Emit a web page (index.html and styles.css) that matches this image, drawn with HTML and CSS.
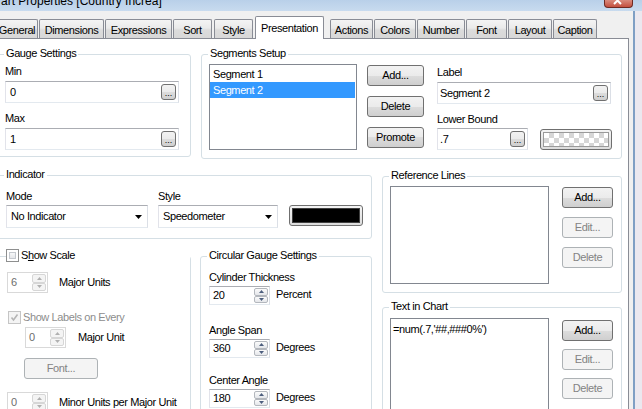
FILE: index.html
```html
<!DOCTYPE html>
<html>
<head>
<meta charset="utf-8">
<link rel="stylesheet" href="styles.css">
</head>
<body>
<div class="titlebar">
  <span class="title">art Properties [Country Increa]</span>
  <span class="close"><svg width="12" height="6" viewBox="0 0 12 6"><path d="M1 -3 L8 4 M8 -3 L1 4" stroke="#fff" stroke-width="2" fill="none"/></svg></span>
</div>
<div class="frame">
  <div class="client">
    <div class="tabs">
      <div class="tab t1">General</div>
      <div class="tab t2">Dimensions</div>
      <div class="tab t3">Expressions</div>
      <div class="tab t4">Sort</div>
      <div class="tab t5">Style</div>
      <div class="tab t6 sel">Presentation</div>
      <div class="tab t7">Actions</div>
      <div class="tab t8">Colors</div>
      <div class="tab t9">Number</div>
      <div class="tab t10">Font</div>
      <div class="tab t11">Layout</div>
      <div class="tab t12">Caption</div>
    </div>
    <div class="panel">
      <div class="row-top">
        <div class="group g-gauge">
          <div class="gtitle">Gauge Settings</div>
          <div class="gbody">
            <div class="lbl">Min</div>
            <div class="textbox tb-gauge"><span>0</span><span class="dots">...</span></div>
            <div class="lbl lbl-next">Max</div>
            <div class="textbox tb-gauge"><span>1</span><span class="dots">...</span></div>
          </div>
        </div>
        <div class="group g-seg">
          <div class="gtitle">Segments Setup</div>
          <div class="gbody seg-body">
            <div class="list seg-list">
              <div class="item">Segment 1</div>
              <div class="item sel">Segment 2</div>
            </div>
            <div class="btncol seg-btns">
              <div class="btn">Add...</div>
              <div class="btn">Delete</div>
              <div class="btn">Promote</div>
            </div>
            <div class="seg-fields">
              <div class="lbl">Label</div>
              <div class="textbox tb-label"><span>Segment 2</span><span class="dots">...</span></div>
              <div class="lbl lbl-next">Lower Bound</div>
              <div class="bound-row">
                <div class="textbox tb-bound"><span>.7</span><span class="dots">...</span></div>
                <div class="swatch sw-check"><div class="sw-inner checker"></div></div>
              </div>
            </div>
          </div>
        </div>
      </div>
      <div class="row-bottom">
        <div class="leftcol">
          <div class="group g-ind">
            <div class="gtitle">Indicator</div>
            <div class="gbody ind-body">
              <div class="ind-col ind-mode">
                <div class="lbl">Mode</div>
                <div class="combo"><span>No Indicator</span><svg class="carrow" width="7" height="4" viewBox="0 0 7 4"><path d="M0 0 H7 L3.5 4 Z" fill="#000"/></svg></div>
              </div>
              <div class="ind-col ind-style">
                <div class="lbl">Style</div>
                <div class="combo"><span>Speedometer</span><svg class="carrow" width="7" height="4" viewBox="0 0 7 4"><path d="M0 0 H7 L3.5 4 Z" fill="#000"/></svg></div>
              </div>
              <div class="swatch sw-black"><div class="sw-inner black"></div></div>
            </div>
          </div>
          <div class="row-lower">
            <div class="group g-scale">
              <div class="gtitle chk-title"><span class="chk"></span><span class="chk-text">S<u>h</u>ow Scale</span></div>
              <div class="gbody scale-body">
                <div class="spinrow sr-major">
                  <div class="spin dis sp-small"><span class="val">6</span><span class="arrows"><span class="arr"><svg width="5" height="3" viewBox="0 0 5 3"><path d="M0 3 L2.5 0 L5 3Z"/></svg></span><span class="arr"><svg width="5" height="3" viewBox="0 0 5 3"><path d="M0 0 L2.5 3 L5 0Z"/></svg></span></span></div>
                  <span class="spinlbl">Major Units</span>
                </div>
                <div class="chkrow">
                  <span class="chk chk-dis"><svg width="9" height="9" viewBox="0 0 9 9"><path d="M1.5 4.5 L3.5 7 L7.5 1.5" stroke="#b4b4b4" stroke-width="1.6" fill="none"/></svg></span>
                  <span class="distext">Show Labels on Every</span>
                </div>
                <div class="spinrow sr-unit">
                  <div class="spin dis sp-small"><span class="val">0</span><span class="arrows"><span class="arr"><svg width="5" height="3" viewBox="0 0 5 3"><path d="M0 3 L2.5 0 L5 3Z"/></svg></span><span class="arr"><svg width="5" height="3" viewBox="0 0 5 3"><path d="M0 0 L2.5 3 L5 0Z"/></svg></span></span></div>
                  <span class="spinlbl">Major Unit</span>
                </div>
                <div class="btn dis font-btn">Font...</div>
                <div class="spinrow sr-minor">
                  <div class="spin dis sp-small"><span class="val">0</span><span class="arrows"><span class="arr"><svg width="5" height="3" viewBox="0 0 5 3"><path d="M0 3 L2.5 0 L5 3Z"/></svg></span><span class="arr"><svg width="5" height="3" viewBox="0 0 5 3"><path d="M0 0 L2.5 3 L5 0Z"/></svg></span></span></div>
                  <span class="spinlbl">Minor Units per Major Unit</span>
                </div>
              </div>
            </div>
            <div class="group g-circ">
              <div class="gtitle">Circular Gauge Settings</div>
              <div class="gbody circ-body">
                <div class="lbl c-l1">Cylinder Thickness</div>
                <div class="spinrow">
                  <div class="spin sp-wide"><span class="val">20</span><span class="arrows"><span class="arr"><svg width="5" height="3" viewBox="0 0 5 3"><path d="M0 3 L2.5 0 L5 3Z"/></svg></span><span class="arr"><svg width="5" height="3" viewBox="0 0 5 3"><path d="M0 0 L2.5 3 L5 0Z"/></svg></span></span></div>
                  <span class="spinlbl2">Percent</span>
                </div>
                <div class="lbl c-l2">Angle Span</div>
                <div class="spinrow">
                  <div class="spin sp-wide"><span class="val">360</span><span class="arrows"><span class="arr"><svg width="5" height="3" viewBox="0 0 5 3"><path d="M0 3 L2.5 0 L5 3Z"/></svg></span><span class="arr"><svg width="5" height="3" viewBox="0 0 5 3"><path d="M0 0 L2.5 3 L5 0Z"/></svg></span></span></div>
                  <span class="spinlbl2">Degrees</span>
                </div>
                <div class="lbl c-l3">Center Angle</div>
                <div class="spinrow">
                  <div class="spin sp-wide"><span class="val">180</span><span class="arrows"><span class="arr"><svg width="5" height="3" viewBox="0 0 5 3"><path d="M0 3 L2.5 0 L5 3Z"/></svg></span><span class="arr"><svg width="5" height="3" viewBox="0 0 5 3"><path d="M0 0 L2.5 3 L5 0Z"/></svg></span></span></div>
                  <span class="spinlbl2">Degrees</span>
                </div>
              </div>
            </div>
          </div>
        </div>
        <div class="rightcol">
          <div class="group g-ref">
            <div class="gtitle">Reference Lines</div>
            <div class="gbody side-body ref-body">
              <div class="list ref-list"></div>
              <div class="btncol side-btns">
                <div class="btn">Add...</div>
                <div class="btn dis">Edit...</div>
                <div class="btn dis">Delete</div>
              </div>
            </div>
          </div>
          <div class="group g-text">
            <div class="gtitle">Text in Chart</div>
            <div class="gbody side-body text-body">
              <div class="list text-list"><div class="titem">=num(.7,'##,###0%')</div></div>
              <div class="btncol side-btns text-btns">
                <div class="btn">Add...</div>
                <div class="btn dis">Edit...</div>
                <div class="btn dis">Delete</div>
              </div>
            </div>
          </div>
        </div>
      </div>
    </div>
  </div>
  <div class="edge"></div>
</div>
</body>
</html>
```
FILE: styles.css
```css
* { box-sizing: border-box; }
html, body { margin: 0; padding: 0; }
body {
  width: 642px; height: 409px; overflow: hidden;
  background: #ebe8ef;
  font-family: "Liberation Sans", Arial, sans-serif;
  font-size: 11px; line-height: 13px; letter-spacing: -0.4px; color: #000;
}

/* title bar */
.titlebar { height: 11px; display: flex; background: linear-gradient(#b9d0e9, #c8dbef); overflow: hidden; }
.title { font-size: 12px; letter-spacing: 0; line-height: 14px; margin: -6px 0 0 1px; white-space: nowrap; }
.close {
  margin-left: auto; margin-right: 9px; width: 29px; height: 8px;
  background: linear-gradient(#d98a7d, #c4503f); border: 1px solid #6f2a22; border-top: none;
  border-radius: 0 0 4px 4px; display: flex; justify-content: center;
}

/* frame */
.frame { display: flex; height: 398px; }
.client { width: 633px; background: #f0f0f0; display: flex; flex-direction: column; overflow: hidden; }
.edge { width: 2px; background: #7f9fc4; }

/* tabs */
.tabs { display: flex; align-items: flex-end; height: 27px; margin-left: -4px; flex-shrink: 0; }
.tab {
  height: 19px; border: 1px solid #898c95; border-bottom: none; border-radius: 2px 2px 0 0;
  background: linear-gradient(#f4f4f4, #eaeaea 45%, #dcdcdc 55%, #d8d8d8);
  text-align: center; padding-top: 4px; white-space: nowrap; flex-shrink: 0;
}
.tab.sel {
  height: 23px; margin-bottom: -1px; background: #fff; padding-top: 5px;
  position: relative; z-index: 2;
}
.t1 { width: 42px; }
.t2 { width: 65px; margin-left: 1px; }
.t3 { width: 67px; margin-left: 1px; }
.t4 { width: 39px; margin-left: 1px; }
.t5 { width: 39px; margin-left: 2px; }
.t6 { width: 69px; margin-left: 2px; }
.t7 { width: 43px; margin-left: 6px; }
.t8 { width: 42px; margin-left: 1px; }
.t9 { width: 48px; margin-left: 1px; }
.t10 { width: 41px; margin-left: 1px; }
.t11 { width: 44px; margin-left: 1px; }
.t12 { width: 44px; margin-left: 1px; }

/* panel */
.panel {
  margin-left: -10px; width: 639px; height: 400px; flex-shrink: 0;
  border: 1px solid #898c95; background: #fff; padding-left: 6px;
}
.row-top { display: flex; align-items: flex-start; margin-top: 15px; }
.row-bottom { display: flex; align-items: flex-start; margin-top: 16px; }
.leftcol { width: 375px; }
.rightcol { width: 240px; margin: 1px 0 0 10px; }
.row-lower { display: flex; align-items: flex-start; margin-top: 17px; }

/* group boxes */
.group { border: 1px solid #d5dfe5; border-radius: 3px; flex-shrink: 0; }
.gtitle { display: table; margin: -8px 0 0 6px; padding: 0 2px; background: #fff; }
.lbl { height: 13px; white-space: nowrap; }
.lbl-next { margin-top: 9px; }

.g-gauge { width: 194px; }
.g-gauge .gbody { padding: 5px 0 6px 7px; }

.g-seg { width: 421px; margin-left: 10px; }
.seg-body { display: flex; padding: 4px 0 8px 7px; }

.g-ind { width: 375px; }
.ind-body { display: flex; align-items: flex-end; padding: 9px 0 10px 8px; }
.ind-mode { width: 142px; }
.ind-style { width: 120px; margin-left: 10px; }

.g-ref { width: 240px; }
.side-body { display: flex; padding: 5px 0 8px 7px; }
.ref-body { padding-top: 4px; }
.g-text { width: 240px; margin-top: 14px; }

.g-scale { width: 194px; height: 170px; }
.g-circ { width: 172px; height: 170px; margin-left: 9px; }

/* text boxes */
.textbox {
  display: flex; align-items: center; height: 22px; margin-top: 3px;
  border: 1px solid; border-color: #abadb3 #dbdfe6 #e3e9ef #e2e3ea;
  background: #fff; padding: 0 2px 0 4px; white-space: nowrap;
}
.tb-gauge { width: 174px; }
.tb-label { width: 174px; padding-left: 2px; }
.tb-bound { width: 91px; margin-top: 0; padding-left: 2px; }
.dots {
  margin-left: auto; width: 15px; height: 16px; flex-shrink: 0;
  border: 1px solid #707070; border-radius: 3px;
  background: linear-gradient(#f2f2f2, #ebebeb 50%, #dddddd 50%, #cfcfcf);
  font-size: 9px; line-height: 9px; letter-spacing: 0; text-align: center; padding-top: 4px;
}

/* list boxes */
.list { border: 1px solid #828790; background: #fff; flex-shrink: 0; }
.seg-list { width: 148px; height: 86px; padding-top: 1px; }
.item { height: 16px; line-height: 16px; padding-left: 3px; margin-right: 1px; }
.item.sel { background: #3399ff; color: #fff; }
.ref-list { width: 159px; height: 98px; }
.text-list { width: 159px; height: 120px; padding: 4px 0 0 2px; }

/* buttons */
.btncol { display: flex; flex-direction: column; }
.btn {
  height: 21px; display: flex; align-items: center; justify-content: center;
  border: 1px solid #707070; border-radius: 3px; white-space: nowrap;
  background: linear-gradient(#f2f2f2, #ebebeb 50%, #dddddd 50%, #cfcfcf);
}
.btn.dis { border-color: #adb2b5; background: #f4f4f4; color: #838383; }
.seg-btns { width: 57px; margin: 1px 0 0 10px; gap: 10px; }
.side-btns { width: 51px; margin: 1px 0 0 13px; gap: 9px; }
.text-btns { margin-top: 2px; gap: 8px; }

/* segment fields */
.seg-fields { width: 175px; margin-left: 13px; padding-top: 2px; }
.bound-row { display: flex; align-items: flex-start; margin-top: 2px; }

/* swatches */
.swatch {
  flex-shrink: 0; border: 1px solid #6f6f6f; border-radius: 3px; padding: 2px;
  background: linear-gradient(#f4f4f4, #dcdcdc);
}
.sw-check { width: 72px; height: 21px; margin: 1px 0 0 12px; }
.sw-black { width: 74px; height: 21px; margin: 0 0 2px 11px; }
.sw-inner { width: 100%; height: 100%; border: 1px solid #9a9a9a; }
.checker {
  background-color: #fff;
  background-image: conic-gradient(#d6d6d6 25%, #fff 0 50%, #d6d6d6 0 75%, #fff 0);
  background-size: 10px 10px;
}
.black { background: #000; border-color: #404040; }

/* combos */
.combo {
  display: flex; align-items: center; height: 23px; margin-top: 2px;
  border: 1px solid; border-color: #abadb3 #dbdfe6 #e3e9ef #e2e3ea;
  background: #fff; padding: 0 5px 0 4px; white-space: nowrap;
}
.carrow { margin-left: auto; }

/* checkbox */
.chk-title { display: flex; align-items: center; margin-left: 8px; padding-left: 0; }
.chk {
  width: 13px; height: 13px; flex-shrink: 0; border: 1px solid #8e8f8f; background: #fff;
  box-shadow: inset 0 0 0 2px #fff, inset 0 0 0 3px #c4c8ce, inset 0 -4px 4px 2px #e4e6e9;
  display: flex; align-items: center; justify-content: center;
}
.chk-text { margin-left: 2px; padding-right: 2px; }
.chk-dis { border-color: #c5c5c5; background: #f4f4f4; box-shadow: none; }
.chkrow { display: flex; align-items: center; margin-top: 18px; margin-left: 1px; height: 13px; }
.distext { margin-left: 2px; color: #8d8d8d; }

/* spins */
.scale-body { padding: 10px 0 0 9px; }
.spinrow { display: flex; align-items: center; }
.spin {
  display: flex; height: 21px; border: 1px solid; border-color: #abadb3 #dbdfe6 #e3e9ef #e2e3ea;
  background: #fff; flex-shrink: 0;
}
.spin .val { flex: 1; padding-left: 3px; align-self: center; }
.spin .arrows { width: 15px; display: flex; flex-direction: column; padding: 1px 1px 1px 0; }
.arr {
  flex: 1; border: 1px solid #b3b7bd; border-radius: 2px;
  background: linear-gradient(#fbfbfb, #e4e6ea);
  display: flex; align-items: center; justify-content: center;
}
.arr svg { fill: #4c5e7e; }
.spin.dis { border-color: #d9d9d9; }
.spin.dis .val { color: #6d6d6d; }
.spin.dis .arr { border-color: #d6d6d6; background: #f4f4f4; }
.spin.dis .arr svg { fill: #b0b0b0; }
.sp-small { width: 41px; }
.sp-wide { width: 61px; height: 19px; margin-top: 2px; }
.spinlbl { margin-left: 11px; }
.spinlbl2 { margin-left: 6px; }
.sr-unit { margin: 3px 0 0 18px; }
.sr-unit .spinlbl { margin-left: 12px; }
.font-btn { width: 74px; margin: 10px 0 0 17px; }
.sr-minor { margin-top: 13px; }

.circ-body { padding: 9px 0 0 8px; }
.c-l2 { margin-top: 19px; }
.c-l3 { margin-top: 16px; }
```
